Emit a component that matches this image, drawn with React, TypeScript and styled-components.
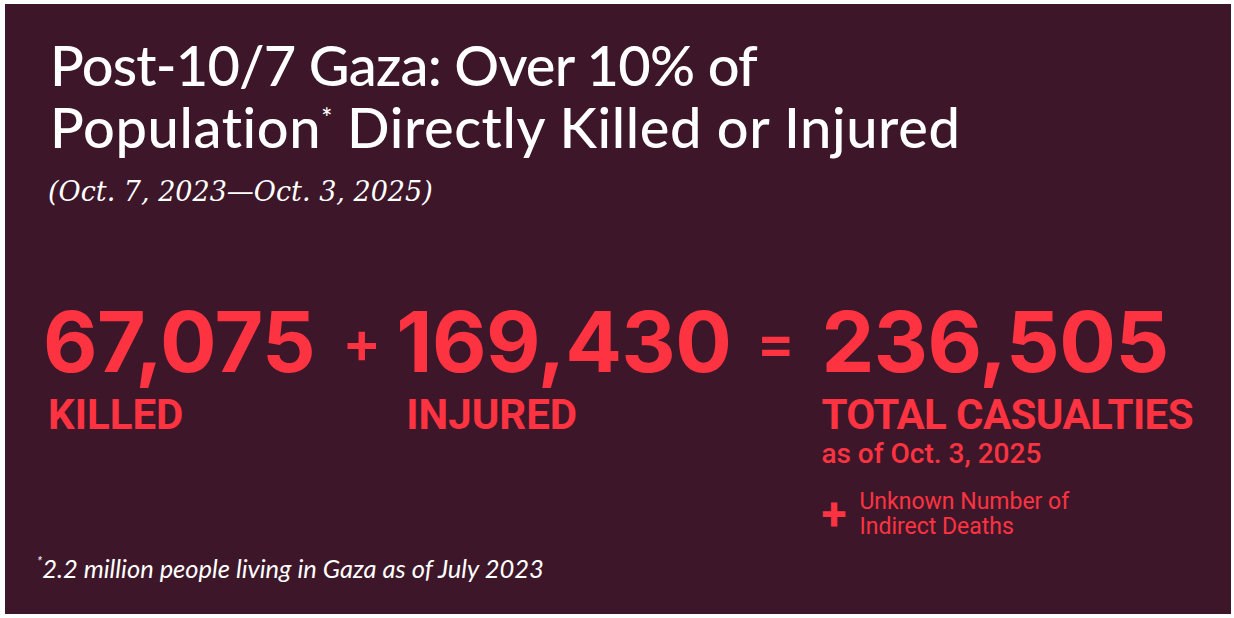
import React from 'react'
import styled, { createGlobalStyle } from 'styled-components'

const GlobalStyle = createGlobalStyle`
    html, body {
        margin: 0;
        padding: 0;
        background: #ffffff;
    }
    #root {
        padding: 4px 3px 4px 5px;
    }
`

const RED = '#fe3341'

const Panel = styled.div`
    height: 610px;
    background: #3d1729;
    box-sizing: border-box;
    padding: 30px 40px 0 38px;
    display: flex;
    flex-direction: column;
    overflow: hidden;
`

const Title = styled.h1`
    margin: 0 0 0 7px;
    font-family: Lato, 'Noto Sans', sans-serif;
    font-weight: 500;
    font-size: 56px;
    line-height: 62px;
    color: #ffffff;

    sup {
        font-size: 26px;
        vertical-align: 20px;
        line-height: 0;
        letter-spacing: 0;
    }
`

const TitleLine = styled.span<{ $tracking: number }>`
    display: block;
    white-space: nowrap;
    letter-spacing: ${p => p.$tracking}px;
`

const Dates = styled.p`
    margin: 16px 0 0 5px;
    font-family: 'DejaVu Serif', serif;
    font-style: italic;
    font-size: 27px;
    line-height: 36px;
    color: #ffffff;
`

const Figures = styled.div`
    display: flex;
    align-items: flex-start;
    margin-top: 90px;
`

const Stat = styled.div<{ $indent?: number }>`
    display: flex;
    flex-direction: column;

    & > span {
        padding-left: ${p => p.$indent ?? 5}px;
    }
`

const Number = styled.div`
    font-family: Inter, Roboto, sans-serif;
    font-weight: 700;
    font-size: 84px;
    line-height: 84px;
    letter-spacing: -0.5px;
    color: ${RED};
`

const Operator = styled.div<{ $left: number; $right: number }>`
    font-family: Inter, Roboto, sans-serif;
    font-weight: 600;
    font-size: 58px;
    line-height: 84px;
    color: ${RED};
    margin: 0 ${p => p.$right}px 0 ${p => p.$left}px;
`

const Label = styled.span`
    display: block;
    margin-top: 10px;
    font-family: Roboto, sans-serif;
    font-weight: 700;
    font-size: 42px;
    line-height: 42px;
    white-space: nowrap;
    color: ${RED};
`

const WideLabel = styled(Label)`
    letter-spacing: -0.6px;
`

const AsOf = styled.span`
    display: block;
    margin-top: 3px;
    font-family: Roboto, sans-serif;
    font-weight: 500;
    font-size: 28px;
    line-height: 30px;
    white-space: nowrap;
    color: ${RED};
`

const Extra = styled.div`
    display: flex;
    align-items: center;
    margin-top: 20px;
    gap: 13px;
`

const ExtraPlus = styled.span`
    font-family: Roboto, sans-serif;
    font-weight: 700;
    font-size: 46px;
    line-height: 40px;
    color: ${RED};
`

const ExtraText = styled.span`
    font-family: Roboto, sans-serif;
    font-weight: 400;
    font-size: 23px;
    line-height: 25px;
    white-space: nowrap;
    color: ${RED};
`

const Footnote = styled.p`
    margin: auto 0 31px -6px;
    font-family: Lato, sans-serif;
    font-style: italic;
    font-size: 25.5px;
    color: #ffffff;

    sup {
        font-size: 13px;
        vertical-align: top;
        line-height: 16px;
    }
`

const App: React.FC = () => {
    return (
        <>
            <GlobalStyle />
            <Panel>
                <Title>
                    <TitleLine $tracking={-0.8}>Post-10/7 Gaza: Over 10% of</TitleLine>
                    <TitleLine $tracking={0.6}>Population<sup>*</sup> Directly Killed or Injured</TitleLine>
                </Title>
                <Dates>(Oct. 7, 2023—Oct. 3, 2025)</Dates>

                <Figures>
                    <Stat>
                        <Number>67,075</Number>
                        <Label>KILLED</Label>
                    </Stat>
                    <Operator $left={27} $right={15}>+</Operator>
                    <Stat $indent={10}>
                        <Number>169,430</Number>
                        <Label>INJURED</Label>
                    </Stat>
                    <Operator $left={25} $right={26}>=</Operator>
                    <Stat $indent={0}>
                        <Number>236,505</Number>
                        <WideLabel>TOTAL CASUALTIES</WideLabel>
                        <AsOf>as of Oct. 3, 2025</AsOf>
                        <Extra>
                            <ExtraPlus>+</ExtraPlus>
                            <ExtraText>Unknown Number of<br />Indirect Deaths</ExtraText>
                        </Extra>
                    </Stat>
                </Figures>

                <Footnote><sup>*</sup>2.2 million people living in Gaza as of July 2023</Footnote>
            </Panel>
        </>
    )
}

export default App
